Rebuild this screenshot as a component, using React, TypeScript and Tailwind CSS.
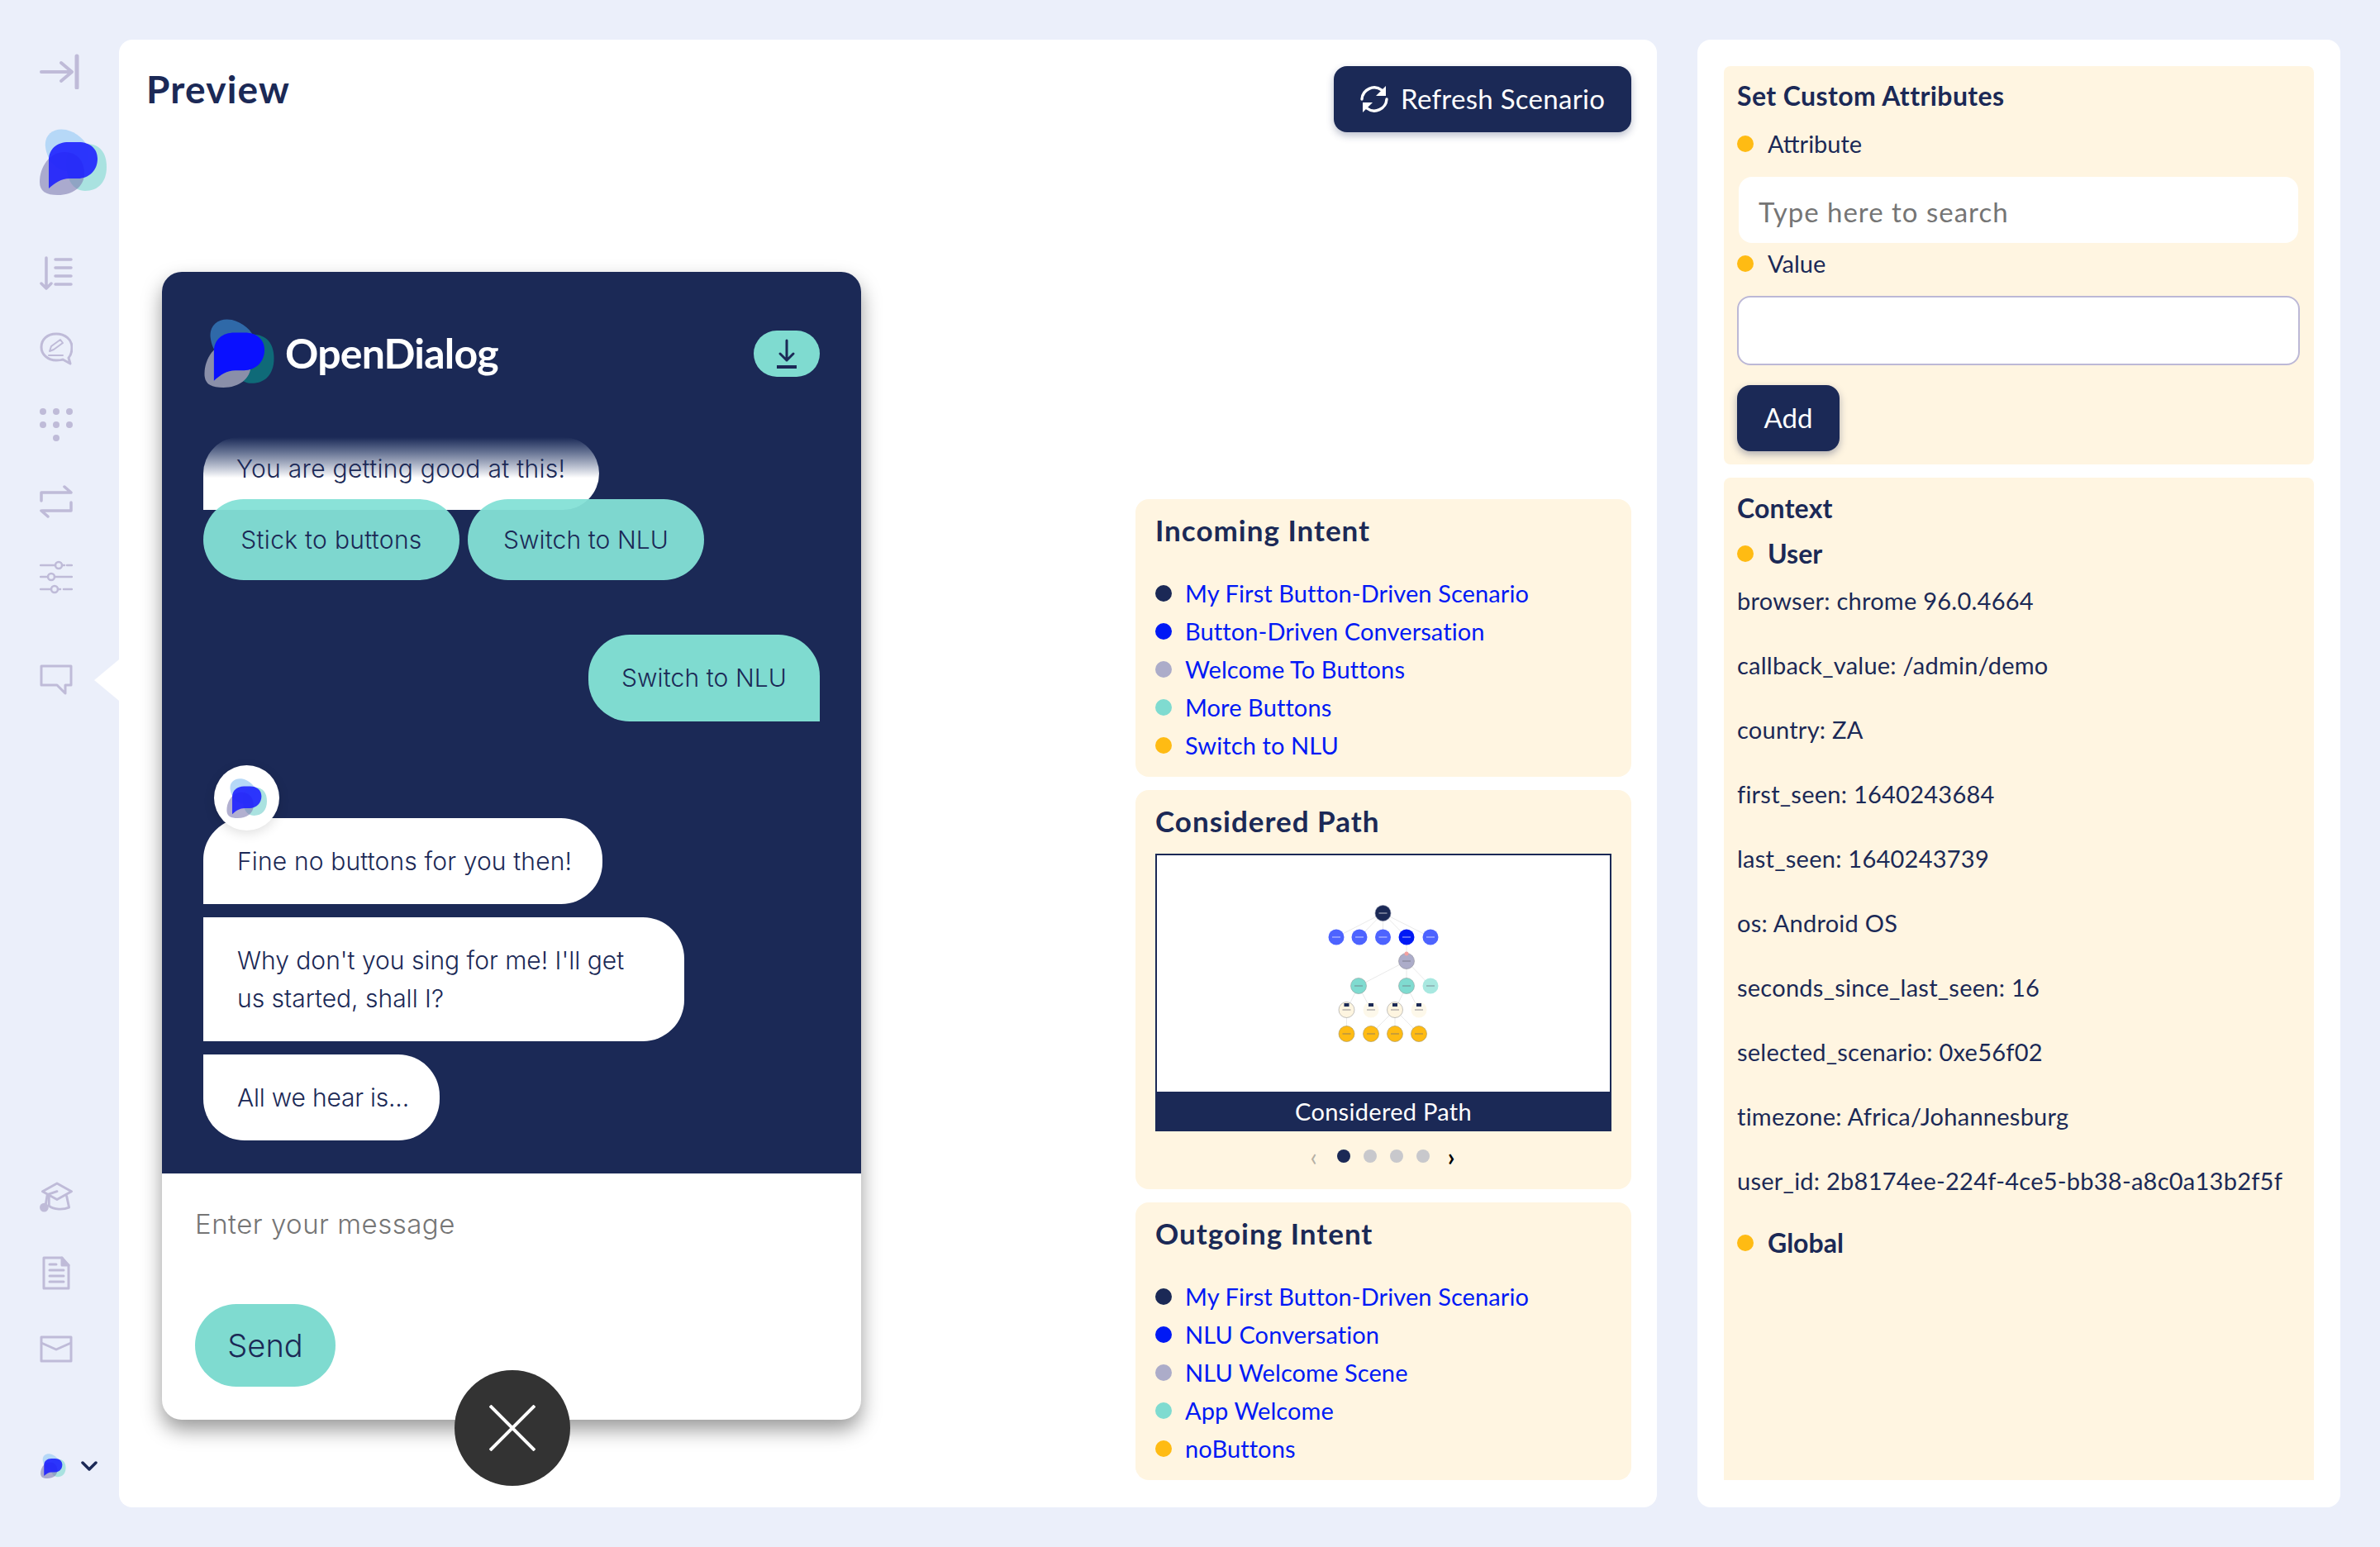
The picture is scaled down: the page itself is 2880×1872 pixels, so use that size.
import React from "react"

const NAVY = "#1b2956"

const incoming = [
  { color: "bg-[#1b2956]", label: "My First Button-Driven Scenario" },
  { color: "bg-[#0019f5]", label: "Button-Driven Conversation" },
  { color: "bg-[#acacc9]", label: "Welcome To Buttons" },
  { color: "bg-[#7fdbd0]", label: "More Buttons" },
  { color: "bg-[#ffbb13]", label: "Switch to NLU" },
]

const outgoing = [
  { color: "bg-[#1b2956]", label: "My First Button-Driven Scenario" },
  { color: "bg-[#0019f5]", label: "NLU Conversation" },
  { color: "bg-[#acacc9]", label: "NLU Welcome Scene" },
  { color: "bg-[#7fdbd0]", label: "App Welcome" },
  { color: "bg-[#ffbb13]", label: "noButtons" },
]

const contextRows = [
  "browser: chrome 96.0.4664",
  "callback_value: /admin/demo",
  "country: ZA",
  "first_seen: 1640243684",
  "last_seen: 1640243739",
  "os: Android OS",
  "seconds_since_last_seen: 16",
  "selected_scenario: 0xe56f02",
  "timezone: Africa/Johannesburg",
  "user_id: 2b8174ee-224f-4ce5-bb38-a8c0a13b2f5f",
]

// logo drawn on an 82x80 box, colours differ between the light and dark spots
const Logo = ({ className, dark }: { className: string; dark?: boolean }) => (
  <svg viewBox="0 0 82 80" className={className}>
    <path
      d="M7 22C5 6 18-2 32 1c12 3 24 12 27 24 3 14-8 26-24 26C20 51 9 38 7 22Z"
      fill={dark ? "#2f69a8" : "#b6d8f7"}
    />
    <path
      d="M32 40c0-14 8-22 24-22 16 0 25 10 25 28 0 18-10 29-26 29-15 0-23-14-23-35Z"
      fill={dark ? "#0f6a78" : "#a5e0de"}
      fillOpacity={dark ? 1 : 0.95}
    />
    <path
      d="M0 64c0-18 12-36 30-36 16 0 24 12 24 26 0 16-14 26-32 26C8 80 0 76 0 64Z"
      fill={dark ? "#8a8fa9" : "#7f7cb0"}
      fillOpacity={dark ? 1 : 0.6}
    />
    <path
      d="M11 38c0-14 10-22 24-22h12c14 0 23 8 23 20 0 14-10 24-24 24H36c-10 0-17 5-25 12Z"
      fill={dark ? "#0a10ff" : "#1a1dff"}
      fillOpacity={dark ? 1 : 0.88}
    />
  </svg>
)

const iconStroke = "#bfbbd8"

const Dot = ({ className }: { className: string }) => (
  <span className={`inline-block w-[20px] h-[20px] rounded-full shrink-0 ${className}`} />
)

const Sidebar = () => (
  <aside className="relative w-[144px] h-full shrink-0 flex flex-col items-start pl-[48px]">
    {/* collapse */}
    <svg viewBox="0 0 48 43" className="w-[48px] h-[43px] mt-[17px] shrink-0" fill="none" stroke={iconStroke} strokeLinecap="round" strokeLinejoin="round">
      <path d="M2 22h36" strokeWidth="4" />
      <path d="M26 11l13 11-13 11" strokeWidth="4" />
      <path d="M45 3v38" strokeWidth="5" />
    </svg>

    <Logo className="w-[82px] h-[80px] mt-[48px] shrink-0" />

    {/* list */}
    <svg viewBox="0 0 40 41" className="w-[40px] h-[41px] mt-[74px] shrink-0" fill="none" stroke={iconStroke} strokeWidth="3.5" strokeLinecap="round" strokeLinejoin="round">
      <path d="M8 2v36M2 33l6 6 6-6" />
      <path d="M19 4h19M19 14h19M19 24h19M19 34h19" />
    </svg>

    {/* chat edit */}
    <svg viewBox="0 0 40 40" className="w-[40px] h-[40px] mt-[51px] shrink-0" fill="none" stroke={iconStroke} strokeWidth="3" strokeLinecap="round" strokeLinejoin="round">
      <path d="M20 2C9 2 2 9 2 18s8 16 18 16c3 0 6 0 8-1l9 5-2-7c3-3 4-8 4-13C39 9 31 2 20 2Z" />
      <path d="M12 23l2-6 11-8 3 4-11 8-5 2ZM11 28h17" strokeWidth="2" />
    </svg>

    {/* dots */}
    <svg viewBox="0 0 40 41" className="w-[40px] h-[41px] mt-[52px] shrink-0" fill={iconStroke}>
      <ellipse cx="4" cy="4" rx="4" ry="4" />
      <ellipse cx="20" cy="4" rx="4" ry="4" />
      <ellipse cx="36" cy="4" rx="4" ry="4" />
      <ellipse cx="4" cy="20" rx="4" ry="4" />
      <ellipse cx="20" cy="20" rx="4" ry="4" />
      <ellipse cx="36" cy="20" rx="4" ry="4" />
      <ellipse cx="20" cy="36" rx="4" ry="4" />
    </svg>

    {/* repeat */}
    <svg viewBox="0 0 40 40" className="w-[40px] h-[40px] mt-[52px] shrink-0" fill="none" stroke={iconStroke} strokeWidth="3.5" strokeLinecap="round" strokeLinejoin="round">
      <path d="M2 19V9h35M30 2l8 7" />
      <path d="M38 21v10H3M10 38l-8-7" />
    </svg>

    {/* sliders */}
    <svg viewBox="0 0 40 41" className="w-[40px] h-[41px] mt-[51px] shrink-0" fill="none" stroke={iconStroke} strokeWidth="2.5" strokeLinecap="round">
      <path d="M1 6h18M27 6h3M33 6h6" />
      <path d="M1 20h9M18 20h21" />
      <path d="M1 35h13M22 35h3M29 35h10" />
      <circle cx="23" cy="6" r="4" />
      <circle cx="14" cy="20" r="4" />
      <circle cx="18" cy="35" r="4" />
    </svg>

    {/* comment */}
    <svg viewBox="0 0 40 37" className="w-[40px] h-[37px] mt-[85px] shrink-0" fill="none" stroke={iconStroke} strokeWidth="3" strokeLinejoin="round">
      <path d="M2 2h36v23H31v10l-10-10H2Z" />
    </svg>

    {/* cap */}
    <svg viewBox="0 0 40 38" className="w-[40px] h-[37px] mt-[589px] shrink-0" fill="none" stroke={iconStroke} strokeWidth="3" strokeLinecap="round" strokeLinejoin="round">
      <path d="M21 2L39 12 21 22 3 12Z" />
      <path d="M11 18v12c6 5 18 5 25 2l-3-14" />
      <path d="M21 12L9 16 7 28" />
      <circle cx="5" cy="32" r="4" fill={iconStroke} />
    </svg>

    {/* doc */}
    <svg viewBox="0 0 34 41" className="w-[34px] h-[41px] mt-[53px] ml-[3px] shrink-0" fill="none" stroke={iconStroke} strokeWidth="3" strokeLinecap="round" strokeLinejoin="round">
      <path d="M2 2h22l8 9v28H2Z" />
      <path d="M24 2v9h8" fill={iconStroke} />
      <path d="M9 10h8M9 17h17M9 24h17M9 31h17" />
    </svg>

    {/* mail */}
    <svg viewBox="0 0 40 33" className="w-[40px] h-[33px] mt-[55px] shrink-0" fill="none" stroke={iconStroke} strokeWidth="3" strokeLinejoin="round">
      <path d="M2 2h36v29H2Z" />
      <path d="M2 9l18 8 18-8" />
    </svg>

    {/* account */}
    <div className="flex items-center mt-[110px] ml-[1px]">
      <Logo className="w-[31px] h-[30px]" />
      <svg viewBox="0 0 20 12" className="w-[20px] h-[12px] ml-[18px]" fill="none" stroke={NAVY} strokeWidth="3.5" strokeLinecap="round" strokeLinejoin="round">
        <path d="M2 2l8 8 8-8" />
      </svg>
    </div>

    {/* active marker */}
    <div className="absolute left-[114px] top-[750px] w-0 h-0 border-y-[25px] border-y-transparent border-r-[30px] border-r-white" />
  </aside>
)

const IntentCard = ({ title, rows }: { title: string; rows: { color: string; label: string }[] }) => (
  <section className="bg-[#fff5e1] rounded-[16px] h-[336px] px-[24px] pt-[14px]">
    <h2 className="text-[35px] leading-[46px] font-bold text-[#1b2956] tracking-[1px]">{title}</h2>
    <ul className="mt-[31px]">
      {rows.map(row => (
        <li key={row.label} className="flex items-center h-[46px] gap-[16px]">
          <Dot className={row.color} />
          <span className="text-[29px] text-[#0019f5] tracking-[0.1px]">{row.label}</span>
        </li>
      ))}
    </ul>
  </section>
)

const nodes = [
  { x: 273.5, y: 70, fill: "#1b2956", stroke: "#7d84a0" },
  { x: 217, y: 99, fill: "#4d63ff" },
  { x: 245, y: 99, fill: "#4d63ff" },
  { x: 273.5, y: 99, fill: "#4d63ff" },
  { x: 302, y: 99, fill: "#0019f5" },
  { x: 331, y: 99, fill: "#4d63ff" },
  { x: 302, y: 128, fill: "#acacc9", stroke: "#8f8f99" },
  { x: 244, y: 158, fill: "#7fdbd0", stroke: "#8f9f9c" },
  { x: 302, y: 158, fill: "#7fdbd0", stroke: "#8f9f9c" },
  { x: 331, y: 158, fill: "#a8e8e0" },
  { x: 229.5, y: 187, fill: "#fef5e0", stroke: "#999" },
  { x: 259, y: 187, fill: "#fdf8ea" },
  { x: 288, y: 187, fill: "#fef5e0", stroke: "#999" },
  { x: 317, y: 187, fill: "#fdf8ea" },
  { x: 229.5, y: 216, fill: "#ffbb13", stroke: "#a09060" },
  { x: 259, y: 216, fill: "#ffbb13", stroke: "#a09060" },
  { x: 288, y: 216, fill: "#ffbb13", stroke: "#a09060" },
  { x: 317, y: 216, fill: "#ffbb13", stroke: "#a09060" },
]

const edges = [
  [0, 1], [0, 2], [0, 3], [0, 4], [0, 5], [4, 6], [6, 7], [6, 8], [6, 9],
  [7, 10], [7, 11], [8, 12], [8, 13], [10, 14], [12, 15], [12, 16], [12, 17],
]

const PathDiagram = () => (
  <svg viewBox="0 0 548 286" className="w-[548px] h-[286px] block bg-white">
    {edges.map(([a, b]) => (
      <line key={`${a}-${b}`} x1={nodes[a].x} y1={nodes[a].y} x2={nodes[b].x} y2={nodes[b].y} stroke="#e3e3e3" strokeWidth="0.8" />
    ))}
    {nodes.map((n, i) => (
      <g key={i}>
        <circle cx={n.x} cy={n.y} r="9.5" fill={n.fill} stroke={n.stroke || "none"} strokeWidth="0.6" />
        <line x1={n.x - 5} y1={n.y} x2={n.x + 5} y2={n.y} stroke={i < 6 ? "#ffffff" : "#6d6d7a"} strokeWidth="1.2" opacity="0.6" />
        {i >= 10 && i < 14 && <rect x={n.x - 3} y={n.y - 8} width="6" height="4" fill="#1b2956" />}
      </g>
    ))}
    <circle cx="302" cy="119" r="2.5" fill="#f2a0a0" />
  </svg>
)

const ChatWidget = () => (
  <div className="relative w-[846px] h-[1389px] rounded-[24px] bg-white shadow-[0_12px_24px_rgba(0,0,0,0.4)] shrink-0">
    <div className="bg-[#1b2956] rounded-t-[24px] h-[1091px] px-[50px] pt-[57px]">
      {/* header */}
      <div className="flex items-center justify-between h-[83px]">
        <div className="flex items-center">
          <Logo className="w-[88px] h-[83px]" dark />
          <span className="ml-[11px] text-[50px] font-bold text-white tracking-[-0.8px] font-['Lato',sans-serif]">OpenDialog</span>
        </div>
        <div className="w-[80px] h-[56px] rounded-full bg-[#7fdbd0] flex items-center justify-center">
          <svg viewBox="0 0 26 36" className="w-[26px] h-[36px]" fill="none" stroke={NAVY} strokeWidth="3" strokeLinecap="round" strokeLinejoin="round">
            <path d="M13 2v24M5 18l8 8 8-8" />
            <path d="M1 34h24" strokeWidth="4" strokeLinecap="butt" />
          </svg>
        </div>
      </div>

      {/* buttons message */}
      <div className="mt-[60px] w-[479px] h-[88px] rounded-t-[50px] rounded-br-[50px] bg-gradient-to-b from-[#1b2956] to-white to-[56%] flex items-center pl-[40px] pb-[12px] text-[30px] font-light text-[#1b2956] tracking-[0.3px]">
        You are getting good at this!
      </div>
      <div className="flex gap-[10px] -mt-[13px] relative">
        <div className="w-[310px] h-[98px] rounded-[50px] bg-[#84e0d6]/95 flex items-center justify-center text-[30px] font-light text-[#1b2956] tracking-[0.3px]">Stick to buttons</div>
        <div className="w-[286px] h-[98px] rounded-[50px] bg-[#84e0d6]/95 flex items-center justify-center text-[30px] font-light text-[#1b2956] tracking-[0.1px]">Switch to NLU</div>
      </div>

      {/* user */}
      <div className="flex justify-end mt-[66px]">
        <div className="w-[280px] h-[105px] rounded-t-[50px] rounded-bl-[50px] bg-[#7fdbd0] flex items-center justify-center text-[30px] font-light text-[#1b2956] tracking-[0.1px]">Switch to NLU</div>
      </div>

      {/* bot */}
      <div className="relative mt-[117px] w-[483px] h-[104px] rounded-t-[50px] rounded-br-[50px] bg-white flex items-center pl-[41px] text-[30px] font-light text-[#1b2956] tracking-[0.15px]">
        <div className="absolute left-[13px] -top-[64px] w-[79px] h-[79px] rounded-full bg-white shadow-[0_4px_14px_rgba(0,0,0,0.12)] flex items-center justify-center">
          <Logo className="w-[50px] h-[48px]" />
        </div>
        Fine no buttons for you then!
      </div>
      <div className="mt-[16px] w-[582px] h-[150px] rounded-r-[50px] bg-white flex items-center pl-[41px] pr-[60px] text-[30px] leading-[46px] font-light text-[#1b2956] tracking-[0px]">
        Why don't you sing for me! I'll get us started, shall I?
      </div>
      <div className="mt-[16px] w-[286px] h-[104px] rounded-r-[50px] rounded-bl-[50px] bg-white flex items-center pl-[41px] text-[30px] font-light text-[#1b2956] tracking-[-0.2px]">
        All we hear is...
      </div>
    </div>

    {/* composer */}
    <div className="px-[40px] pt-[42px]">
      <input
        placeholder="Enter your message"
        className="block w-full h-[40px] text-[33px] font-light tracking-[0.5px] placeholder:text-[#757575] outline-none"
      />
      <button className="mt-[76px] w-[170px] h-[100px] rounded-[50px] bg-[#7fdbd0] text-[38px] font-light text-[#1b2956]">Send</button>
    </div>

    {/* close launcher */}
    <div className="absolute left-[354px] top-[1329px] w-[140px] h-[140px] rounded-full bg-[#333333] flex items-center justify-center">
      <svg viewBox="0 0 56 56" className="w-[56px] h-[56px]" stroke="#ffffff" strokeWidth="4">
        <path d="M1 1l54 54M55 1L1 55" />
      </svg>
    </div>
  </div>
)

export default function App() {
  return (
    <div className="w-[2880px] h-[1872px] bg-[#ebeffa] flex py-[48px] font-['Lato',sans-serif] text-[#1b2956] overflow-hidden">
      <Sidebar />

      {/* PREVIEW PANEL */}
      <main className="w-[1861px] h-full bg-white rounded-[16px] pl-[52px] pr-[31px] shrink-0 font-['Inter',sans-serif]">
        <div className="flex justify-between items-start pt-[32px] h-[281px] font-['Lato',sans-serif]">
          <h1 className="text-[46px] leading-[56px] font-bold -ml-[19px] text-[#1b2956] tracking-[1.2px]">Preview</h1>
          <button className="w-[360px] h-[80px] rounded-[16px] bg-[#1b2956] text-white text-[33px] tracking-[0.3px] flex items-center pl-[32px] gap-[15px] shadow-[0_4px_10px_rgba(27,41,86,0.3)]">
            <svg viewBox="0 0 34 34" className="w-[34px] h-[34px]" fill="none" stroke="#ffffff" strokeWidth="3.4" strokeLinecap="round">
              <path d="M2 17A15 15 0 0 1 26 6" />
              <path d="M32 17A15 15 0 0 1 8 28" />
              <path d="M31 1v12H19Z" fill="#ffffff" stroke="none" />
              <path d="M3 33V21h12Z" fill="#ffffff" stroke="none" />
            </svg>
            Refresh Scenario
          </button>
        </div>

        <div className="flex justify-between items-start">
          <ChatWidget />

          <div className="w-[600px] mt-[275px] flex flex-col gap-[16px] font-['Lato',sans-serif]">
            <IntentCard title="Incoming Intent" rows={incoming} />

            <section className="bg-[#fff5e1] rounded-[16px] h-[483px] px-[24px] pt-[14px]">
              <h2 className="text-[35px] leading-[46px] font-bold text-[#1b2956] tracking-[1px]">Considered Path</h2>
              <div className="mt-[17px] w-[552px] border-2 border-[#1b2956]">
                <PathDiagram />
                <div className="h-[48px] -mx-[2px] -mb-[2px] bg-[#1b2956] text-white text-[29px] tracking-[0.3px] flex items-center justify-center">Considered Path</div>
              </div>
              <div className="mt-[22px] pr-[2px] flex items-center justify-center gap-[16px]">
                <span className="text-[30px] leading-[16px] text-[#b5b0a5] mr-[8px]">‹</span>
                <span className="w-[16px] h-[16px] rounded-full bg-[#1b2956]" />
                <span className="w-[16px] h-[16px] rounded-full bg-[#c8c8cc]" />
                <span className="w-[16px] h-[16px] rounded-full bg-[#c8c8cc]" />
                <span className="w-[16px] h-[16px] rounded-full bg-[#c8c8cc]" />
                <span className="text-[30px] leading-[16px] text-black ml-[6px] font-bold">›</span>
              </div>
            </section>

            <IntentCard title="Outgoing Intent" rows={outgoing} />
          </div>
        </div>
      </main>

      {/* ATTRIBUTES PANEL */}
      <aside className="ml-[49px] w-[778px] h-full bg-white rounded-[16px] px-[32px] pt-[32px] shrink-0">
        <section className="bg-[#fff5e1] rounded-[8px] h-[482px] px-[16px] pt-[16px]">
          <h2 className="text-[32px] leading-[40px] font-bold tracking-[0.4px]">Set Custom Attributes</h2>
          <div className="flex items-center gap-[17px] h-[40px] mt-[18px] text-[29px]"><Dot className="bg-[#ffbb13]" />Attribute</div>
          <input
            placeholder="Type here to search"
            className="block mt-[20px] ml-[2px] w-[677px] h-[80px] rounded-[16px] bg-white px-[24px] pt-[3px] text-[33px] tracking-[1px] placeholder:text-[#757575] outline-none"
          />
          <div className="flex items-center gap-[17px] h-[40px] mt-[5px] text-[29px]"><Dot className="bg-[#ffbb13]" />Value</div>
          <input className="block mt-[19px] w-[681px] h-[84px] rounded-[16px] bg-white border-2 border-[#bcb8d6] outline-none" />
          <button className="mt-[24px] w-[124px] h-[80px] rounded-[16px] bg-[#1b2956] text-white text-[33px] shadow-[0_4px_10px_rgba(27,41,86,0.35)]">Add</button>
        </section>

        <section className="mt-[16px] bg-[#fff5e1] rounded-t-[8px] h-[1213px] px-[16px] pt-[17px]">
          <h2 className="text-[32px] leading-[40px] font-bold tracking-[0.2px]">Context</h2>
          <div className="flex items-center gap-[17px] h-[40px] mt-[15px] text-[32px] font-bold"><Dot className="bg-[#ffbb13]" />User</div>
          <div className="mt-[-2px]">
            {contextRows.map(row => (
              <p key={row} className="text-[29px] leading-[78px] tracking-[0.25px]">{row}</p>
            ))}
          </div>
          <div className="flex items-center gap-[17px] h-[40px] mt-[16px] text-[32px] font-bold"><Dot className="bg-[#ffbb13]" />Global</div>
        </section>
      </aside>
    </div>
  )
}
